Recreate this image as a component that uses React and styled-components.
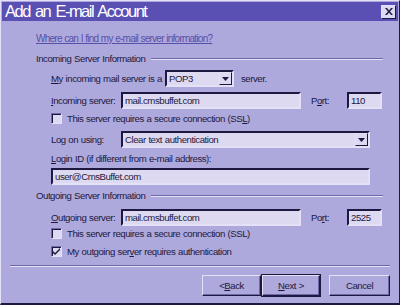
import React from "react";
import styled, { createGlobalStyle } from "styled-components";

const C = {
  face: "#aea9dc",
  title: "#5a4fb2",
  field: "#dcd9f0",
  text: "#1c1840",
  link: "#5650a8",
  light: "#e4e1f6",
  shadow: "#6e68a8",
  dark: "#1c1840",
};

const Global = createGlobalStyle`
  html, body { margin: 0; padding: 0; background: ${C.face}; }
  body {
    font-family: "Liberation Sans", Arial, sans-serif;
    font-size: 9.6px;
    letter-spacing: -0.45px;
    word-spacing: 0.5px;
    color: ${C.text};
  }
`;

const Window = styled.div`
  width: 400px;
  height: 305px;
  box-sizing: border-box;
  background: ${C.face};
  border-top: 1px solid ${C.light};
  border-left: 1px solid ${C.light};
  border-right: 1px solid ${C.dark};
  border-bottom: 2px solid ${C.dark};
  display: flex;
  flex-direction: column;
  overflow: hidden;
`;

const TitleBar = styled.div`
  height: 19px;
  margin: 1px 1px 0 1px;
  background: ${C.title};
  display: flex;
  align-items: center;
  justify-content: space-between;
  padding: 0 2px 0 3px;
`;

const TitleText = styled.span`
  color: #fff;
  font-size: 16.5px;
  letter-spacing: -1.5px;
  word-spacing: 2px;
  line-height: 19px;
`;

const CloseBtn = styled.div`
  width: 15px;
  height: 14px;
  box-sizing: border-box;
  background: ${C.field};
  border: 1px solid;
  border-color: ${C.light} ${C.dark} ${C.dark} ${C.light};
  display: flex;
  align-items: center;
  justify-content: center;
`;

const Body = styled.div`
  display: flex;
  flex-direction: column;
  padding: 0 0 0 35px;
`;

const Row = styled.div`
  display: flex;
  align-items: center;
  height: ${(p) => p.$h || 13}px;
  margin-top: ${(p) => p.$mt || 0}px;
  margin-left: ${(p) => p.$ml || 0}px;
`;

const Link = styled.a`
  color: ${C.link};
  text-decoration: underline;
  line-height: 13px;
  font-size: 10px;
  letter-spacing: -0.75px;
  word-spacing: 0.5px;
`;

const Heading = styled.span`
  white-space: nowrap;
  margin-right: 6px;
`;

const Rule = styled.div`
  flex: 1;
  height: 0;
  border-top: 1px solid ${C.shadow};
  border-bottom: 1px solid ${C.light};
  margin-right: ${(p) => p.$mr || 0}px;
`;

const Label = styled.span`
  white-space: nowrap;
  width: ${(p) => (p.$w ? `${p.$w}px` : "auto")};
  padding-left: ${(p) => p.$pl || 0}px;
  margin-left: ${(p) => p.$ml || 0}px;
  flex-shrink: 0;
  & u { text-decoration: underline; }
`;

const Field = styled.div`
  box-sizing: border-box;
  width: ${(p) => p.$w}px;
  height: 17px;
  background: ${C.field};
  border: 2px solid;
  border-color: ${C.dark} ${C.light} ${C.light} ${C.dark};
  padding: 0 2px;
  display: flex;
  align-items: center;
  justify-content: space-between;
  line-height: 13px;
  white-space: nowrap;
  overflow: hidden;
`;

const DropBtn = styled.div`
  width: 13px;
  height: 13px;
  box-sizing: border-box;
  margin-right: -2px;
  background: ${C.field};
  border: 1px solid;
  border-color: ${C.light} ${C.dark} ${C.dark} ${C.light};
  display: flex;
  align-items: center;
  justify-content: center;
`;

const Box = styled.div`
  width: 11px;
  height: 11px;
  box-sizing: border-box;
  background: ${C.field};
  border: 1px solid;
  border-color: ${C.shadow} ${C.light} ${C.light} ${C.shadow};
  box-shadow: inset 1px 1px 0 ${C.dark};
  margin-right: 5px;
  display: flex;
  align-items: center;
  justify-content: center;
`;

const Separator = styled.div`
  margin: 7px 9px 0 9px;
  border-top: 1px solid ${C.shadow};
  border-bottom: 1px solid ${C.light};
`;

const Buttons = styled.div`
  display: flex;
  justify-content: flex-end;
  margin-top: 8px;
  padding-right: 9px;
`;

const Button = styled.div`
  box-sizing: border-box;
  width: ${(p) => p.$w}px;
  height: 21px;
  margin-left: ${(p) => p.$ml || 0}px;
  background: ${C.face};
  border: 1px solid;
  border-color: ${C.light} ${C.dark} ${C.dark} ${C.light};
  box-shadow: ${(p) =>
    p.$default ? `0 0 0 1px ${C.dark}, inset -1px -1px 0 ${C.shadow}` : `inset -1px -1px 0 ${C.shadow}`};
  display: flex;
  align-items: center;
  justify-content: center;
  & u { text-decoration: underline; }
`;

const Arrow = () => (
  <svg width="7" height="4" viewBox="0 0 7 4">
    <path d="M0 0h7L3.5 4z" fill={C.dark} />
  </svg>
);

const Check = ({ checked }) => (
  <Box>
    {checked && (
      <svg width="7" height="7" viewBox="0 0 7 7">
        <path d="M0 3l2 2 5-5v2L2 7 0 5z" fill={C.dark} />
      </svg>
    )}
  </Box>
);

export default function App() {
  return (
    <>
      <Global />
      <Window>
        <TitleBar>
          <TitleText>Add an E-mail Account</TitleText>
          <CloseBtn>
            <svg width="8" height="7" viewBox="0 0 8 7">
              <path d="M0 0h2l2 2.5L6 0h2L5 3.5 8 7H6L4 4.5 2 7H0l3-3.5z" fill={C.dark} />
            </svg>
          </CloseBtn>
        </TitleBar>
        <Body>
          <Row $mt={11}>
            <Link>Where can I find my e-mail server information?</Link>
          </Row>
          <Row $mt={7}>
            <Heading>Incoming Server Information</Heading>
            <Rule $mr={16} />
          </Row>
          <Row $mt={5} $h={17} $ml={15}>
            <Label $w={114}>
              <u>M</u>y incoming mail server is a
            </Label>
            <Field $w={69}>
              POP3
              <DropBtn>
                <Arrow />
              </DropBtn>
            </Field>
            <Label $ml={7}>server.</Label>
          </Row>
          <Row $mt={5} $h={17} $ml={15}>
            <Label $w={70}>
              <u>I</u>ncoming server:
            </Label>
            <Field $w={180}>mail.cmsbuffet.com</Field>
            <Label $w={36} $pl={10}>
              P<u>o</u>rt:
            </Label>
            <Field $w={35}>110</Field>
          </Row>
          <Row $mt={3} $ml={15}>
            <Check />
            <Label>
              This server requires a secure connection (SS<u>L</u>)
            </Label>
          </Row>
          <Row $mt={6} $h={17} $ml={15}>
            <Label $w={70}>
              Log on using:
            </Label>
            <Field $w={249}>
              Clear text authentication
              <DropBtn>
                <Arrow />
              </DropBtn>
            </Field>
          </Row>
          <Row $mt={4} $ml={15}>
            <Label>
              <u>L</u>ogin ID (if different from e-mail address):
            </Label>
          </Row>
          <Row $mt={3} $h={17} $ml={15}>
            <Field $w={319}>user@CmsBuffet.com</Field>
          </Row>
          <Row $mt={4}>
            <Heading>Outgoing Server Information</Heading>
            <Rule $mr={16} />
          </Row>
          <Row $mt={7} $h={17} $ml={15}>
            <Label $w={70}>
              <u>O</u>utgoing server:
            </Label>
            <Field $w={180}>mail.cmsbuffet.com</Field>
            <Label $w={36} $pl={10}>
              Po<u>r</u>t:
            </Label>
            <Field $w={35}>2525</Field>
          </Row>
          <Row $mt={1} $ml={15}>
            <Check />
            <Label>This server requires a secure connection (SSL)</Label>
          </Row>
          <Row $mt={5} $ml={15}>
            <Check checked />
            <Label>
              My outgoing ser<u>v</u>er requires authentication
            </Label>
          </Row>
        </Body>
        <Separator />
        <Buttons>
          <Button $w={59}>
            &lt; <u>B</u>ack
          </Button>
          <Button $w={58} $ml={1} $default>
            <u>N</u>ext &gt;
          </Button>
          <Button $w={61} $ml={9}>
            Cancel
          </Button>
        </Buttons>
      </Window>
    </>
  );
}
